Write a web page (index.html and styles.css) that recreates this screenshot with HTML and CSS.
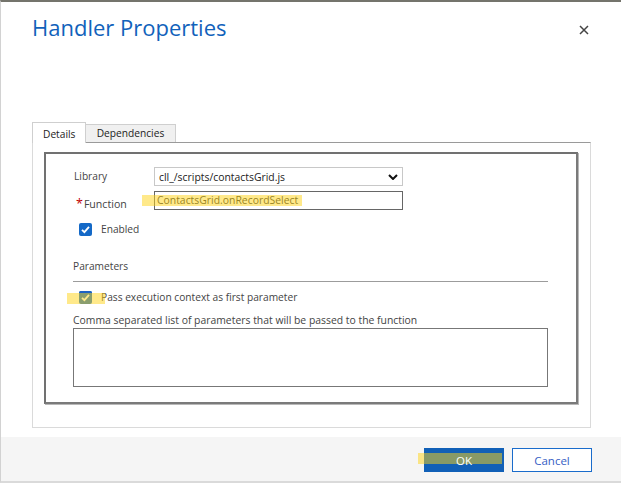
FILE: index.html
```html
<!DOCTYPE html>
<html>
<head>
<meta charset="utf-8">
<link rel="stylesheet" href="styles.css">
</head>
<body>
<div class="dialog">
  <header class="header">
    <h1 class="title">Handler Properties</h1>
    <span class="close" aria-label="Close">
      <svg width="10" height="10" viewBox="0 0 10 10"><path d="M1 1 L9 9 M9 1 L1 9" stroke="#444" stroke-width="1.5" fill="none"/></svg>
    </span>
  </header>
  <main class="content">
    <div class="tabs">
      <div class="tab tab-active">Details</div>
      <div class="tab">Dependencies</div>
    </div>
    <div class="panel">
      <div class="fieldset">
        <div class="row row-library">
          <span class="label label-library">Library</span>
          <div class="select">
            <span class="select-text">cll_/scripts/contactsGrid.js</span>
            <svg class="chevron" width="10" height="6" viewBox="0 0 10 6"><path d="M1 1 L5 5 L9 1" stroke="#111" stroke-width="2" fill="none"/></svg>
          </div>
        </div>
        <div class="row row-function">
          <span class="label label-function"><span class="req">*</span>Function</span>
          <div class="input">
            <span class="input-text">ContactsGrid.onRecordSelect</span>
            <span class="hl hl-function"></span>
          </div>
        </div>
        <div class="check-row check-enabled">
          <span class="cb"><svg width="13" height="13" viewBox="0 0 13 13"><path d="M3 6.8 L5.4 9.2 L10 3.8" stroke="#fff" stroke-width="1.8" fill="none"/></svg></span>
          <span class="check-label">Enabled</span>
        </div>
        <div class="section-title">Parameters</div>
        <div class="check-row check-pass">
          <span class="hl hl-pass"></span>
          <span class="cb"><svg width="13" height="13" viewBox="0 0 13 13"><path d="M3 6.8 L5.4 9.2 L10 3.8" stroke="#fff" stroke-width="1.8" fill="none"/></svg></span>
          <span class="check-label">Pass execution context as first parameter</span>
        </div>
        <div class="hint">Comma separated list of parameters that will be passed to the function</div>
        <div class="textarea"></div>
      </div>
    </div>
  </main>
  <footer class="footer">
    <button class="btn btn-ok"><span class="hl hl-ok"></span><span class="btn-text">OK</span></button>
    <button class="btn btn-cancel">Cancel</button>
  </footer>
</div>
</body>
</html>
```

FILE: styles.css
```css
* { box-sizing: border-box; }
html, body { margin: 0; padding: 0; background: #fff; }
body { font-family: "Open Sans", "Noto Sans", sans-serif; font-size: 10.2px; color: #333; }

.dialog {
  width: 621px;
  height: 483px;
  border-top: 2px solid #74746c;
  border-left: 1px solid #d2d2d2;
  border-bottom: 2px solid #dadada;
  display: flex;
  flex-direction: column;
  background: #fff;
}

.header {
  height: 120px;
  display: flex;
  justify-content: space-between;
  align-items: flex-start;
  padding: 0 32px 0 31px;
}
.title {
  margin: 10px 0 0 0;
  font-size: 22px;
  line-height: 30px;
  font-weight: 400;
  color: #1162bb;
}
.close {
  margin-top: 23px;
  display: flex;
}

.content {
  padding-left: 31px;
  padding-right: 30px;
}

.tabs {
  display: flex;
  align-items: flex-end;
  height: 20px;
  position: relative;
  z-index: 1;
}
.tab {
  height: 18px;
  line-height: 16px;
  padding: 0 10px;
  border: 1px solid #cfcfcf;
  border-bottom: none;
  background: #f0f0f0;
  color: #222;
}
.tab-active {
  height: 21px;
  margin-bottom: -1px;
  background: #fff;
  border-color: #cfcfcf;
  width: 54px;
  line-height: 20px;
  padding-top: 1px;
}
.tab-active + .tab { width: 90px; border-left: none; text-align: center; padding: 0; }

.panel {
  height: 286px;
  border: 1px solid #dadada;
  border-top-color: #9a9a9a;
  padding: 9px 12px 23px 11px;
}

.fieldset {
  height: 252px;
  border: 2px solid #717171;
  border-right-color: #7a7a7a;
  border-bottom-color: #7a7a7a;
  box-shadow: 1px 1px 0 #b8b8b8;
  padding: 13px 28px 0 27px;
}

.row {
  display: flex;
  height: 19px;
}
.row-function { margin-top: 5px; }
.label {
  width: 81px;
  flex: none;
  color: #444;
  line-height: 19px;
}
.label-library { padding-left: 1px; }
.label-function { padding-left: 3px; line-height: 16px; align-self: flex-end; margin-bottom: -2px; font-size: 10.6px; }
.req { color: #c00000; font-size: 12.5px; margin-right: 1px; }

.select {
  width: 249px;
  height: 19px;
  border: 1px solid #c8c8c8;
  display: flex;
  align-items: center;
  justify-content: space-between;
  padding: 0 4px 0 4px;
  color: #222;
  font-size: 10.4px;
}
.chevron { flex: none; }

.input {
  position: relative;
  width: 249px;
  height: 19px;
  border: 1px solid #666;
  padding-left: 2px;
  line-height: 17px;
  color: #333;
  font-size: 10.4px;
}
.hl {
  position: absolute;
  background: rgba(255, 211, 21, 0.5);
  pointer-events: none;
}
.hl-function { left: -13px; top: 3px; width: 160px; height: 11px; }

.check-row {
  position: relative;
  display: flex;
  align-items: center;
  height: 13px;
  padding-left: 6px;
}
.check-enabled { margin-top: 13px; }
.cb {
  width: 13px;
  height: 13px;
  border-radius: 2px;
  background: #1469c7;
  display: flex;
  flex: none;
}
.check-label { margin-left: 9px; color: #444; line-height: 13px; }
.check-pass .cb { box-shadow: inset 0 2px 0 #1c62c4; }
.hl-pass { left: -6px; top: 2px; width: 38px; height: 11px; z-index: 1; }

.section-title {
  margin-top: 22px;
  line-height: 16px;
  padding-bottom: 7px;
  border-bottom: 1px solid #9c9c9c;
  color: #444;
}
.check-pass { margin-top: 9px; }

.hint {
  margin-top: 8px;
  line-height: 16px;
  color: #444;
  font-size: 10.4px;
}
.textarea {
  height: 59px;
  border: 1px solid #777;
}

.footer {
  margin-top: 9px;
  height: 44px;
  background: #f5f5f5;
  display: flex;
  justify-content: flex-end;
  align-items: flex-start;
  gap: 8px;
  padding: 11px 29px 0 0;
}
.btn {
  position: relative;
  width: 80px;
  height: 24px;
  font-family: inherit;
  font-size: 11.5px;
  padding: 0;
  cursor: pointer;
}
.btn-ok {
  background: #1160b7;
  border: 1px solid #1160b7;
  color: #fff;
}
.btn-text { position: relative; }
.hl-ok { left: -7px; top: 4px; width: 84px; height: 11px; }
.btn-cancel {
  background: #fff;
  border: 1px solid #1a6ccb;
  color: #3660c4;
}
```
